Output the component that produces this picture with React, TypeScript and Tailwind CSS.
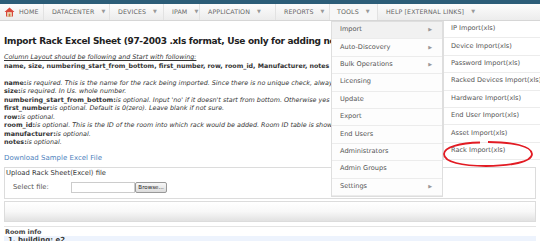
import React from "react";

const navItems = [
  { label: "DATACENTER", w: "w-[66px]" },
  { label: "DEVICES", w: "w-[54px]" },
  { label: "IPAM", w: "w-[36px]" },
  { label: "APPLICATION", w: "w-[76px]" },
  { label: "REPORTS", w: "w-[54px]" },
];

const toolsMenu = [
  { label: "Import", sub: true },
  { label: "Auto-Discovery", sub: true },
  { label: "Bulk Operations", sub: true },
  { label: "Licensing" },
  { label: "Update" },
  { label: "Export" },
  { label: "End Users" },
  { label: "Administrators" },
  { label: "Admin Groups" },
  { label: "Settings", sub: true },
];

const importMenu = [
  "IP Import(xls)",
  "Device Import(xls)",
  "Password Import(xls)",
  "Racked Devices Import(xls)",
  "Hardware Import(xls)",
  "End User Import(xls)",
  "Asset Import(xls)",
  "Rack Import(xls)",
];

const fields = [
  ["name:", "is required. This is the name for the rack being imported. Since there is no unique check, always create new one."],
  ["size:", "is required. In Us. whole number."],
  ["numbering_start_from_bottom:", "is optional. Input 'no' if it doesn't start from bottom. Otherwise yes is default."],
  ["first_number:", "is optional. Default is 0(zero). Leave blank if not sure."],
  ["row:", "is optional."],
  ["room_id:", "is optional. This is the ID of the room into which rack would be added. Room ID table is shown below."],
  ["manufacturer:", "is optional."],
  ["notes:", "is optional."],
];

function Caret() {
  return <span className="ml-[7px] text-[5px] text-[#999]">▼</span>;
}

function HomeIcon() {
  return (
    <svg width="11" height="10" viewBox="0 0 11 10">
      <path d="M5.5 0.5 L10.5 5 L9 5 L9 9.5 L2 9.5 L2 5 L0.5 5 Z" fill="#d9463a" />
      <rect x="3.2" y="5.2" width="4.6" height="4.3" fill="#f1e3c4" />
      <rect x="4.6" y="6.6" width="1.8" height="2.9" fill="#b9823f" />
    </svg>
  );
}

export default function App() {
  return (
    <div className="relative w-[540px] h-[241px] overflow-hidden bg-white font-['DejaVu_Sans',sans-serif] text-[#333]">
      {/* top strip */}
      <div className="h-[4px] bg-[#2c5d78]" />

      {/* nav */}
      <nav className="flex h-[17px] items-center border-b border-[#d6d6d6] bg-gradient-to-b from-[#fcfcfc] to-[#ececec] text-[6.3px] text-[#666] tracking-[0.1px]">
        <div className="flex h-full w-[44px] items-center gap-[4px] border-r border-[#e2e2e2] pl-[4px]">
          <HomeIcon />
          <span>HOME</span>
        </div>
        {navItems.map((n) => (
          <div key={n.label} className={`flex h-full ${n.w} items-center border-r border-[#e2e2e2] pl-[8px]`}>
            <span>{n.label}</span>
            <Caret />
          </div>
        ))}
        <div className="flex h-full w-[48px] items-center bg-[#f7f7f7] pl-[7px] border-r border-[#e2e2e2]">
          <span>TOOLS</span>
          <Caret />
        </div>
        <div className="flex h-full items-center pl-[8px]">
          <span>HELP [EXTERNAL LINKS]</span>
          <Caret />
        </div>
      </nav>

      {/* content, hidden under the open menu on the right */}
      <div className="w-[331px] overflow-hidden whitespace-nowrap pl-[4px]">
        <h1 className="mt-[14px] text-[9px] font-bold leading-[12px] tracking-[-0.3px] text-[#222]">
          Import Rack Excel Sheet (97-2003 .xls format, Use only for adding new racks)
        </h1>
        <p className="mt-[6px] text-[6.4px] italic underline leading-[8.5px]">
          Column Layout should be following and Start with following:
        </p>
        <p className="text-[6.3px] font-bold leading-[8.5px]">
          name, size, numbering_start_from_bottom, first_number, row, room_id, Manufacturer, notes
        </p>
        <div className="mt-[8.5px] text-[6.4px] leading-[8.5px]">
          {fields.map(([k, v]) => (
            <div key={k}>
              <span className="font-bold">{k}</span>
              <span className="italic">{v}</span>
            </div>
          ))}
        </div>
        <a className="mt-[7px] block text-[7px] leading-[9px] text-[#4d7fbd]">Download Sample Excel File</a>
      </div>

      <div className="mx-[4px] mt-[4px] h-[32px] border border-[#dcdcdc] text-[6.8px]">
        <div className="pl-[1px] pt-[1px] leading-[9px]">Upload Rack Sheet(Excel) file</div>
        <div className="mt-[4px] flex items-center pl-[8px] text-[#555]">
          <span className="w-[58px]">Select file:</span>
          <div className="h-[11px] w-[64px] border border-[#ccc] bg-white" />
          <button className="h-[11px] w-[32px] rounded-[2px] border border-[#999] bg-gradient-to-b from-[#f8f8f8] to-[#dcdcdc] text-[5.5px] text-[#222]">
            Browse...
          </button>
        </div>
      </div>

      <div className="mx-[4px] mt-[2px] h-[21px] border border-[#dcdcdc] bg-gradient-to-b from-white via-[#f8f8f8] to-[#e2e2e2]" />

      <div className="mx-[4px] mt-[4px] border-t border-[#e4e4e4]">
        <div className="pl-[1px] pt-[1px] text-[6.4px] font-bold leading-[8px] text-[#444]">Room info</div>
        <div className="bg-[#edf3fd] pl-[4px] text-[7px] font-bold leading-[9px]">1. building: e2</div>
      </div>

      {/* tools dropdown */}
      <div className="absolute left-[331px] top-[21px] w-[112px] border border-[#dedede] bg-white text-[6.6px] text-[#555]">
        {toolsMenu.map((m, i) => (
          <div
            key={m.label}
            className={`flex h-[17.4px] items-center justify-between border-b border-[#ececec] pl-[8px] pr-[10px] ${i === 0 ? "bg-[#f1f1f1]" : "bg-[#fdfdfd]"}`}
          >
            <span>{m.label}</span>
            {m.sub && <span className="text-[5px] text-[#999]">▶</span>}
          </div>
        ))}
      </div>

      {/* import submenu */}
      <div className="absolute left-[443px] top-[21px] w-[110px] border-l border-[#dedede] bg-white text-[6.6px] text-[#555]">
        {importMenu.map((m) => (
          <div key={m} className="flex h-[17.4px] items-center border-b border-[#ececec] pl-[7px]">
            {m}
          </div>
        ))}
      </div>

      {/* red marker */}
      <svg className="absolute left-[440px] top-[140px]" width="96" height="28" viewBox="0 0 96 28">
        <path
          d="M48 2 C72 2 92 6 92 14 C92 22 70 26 46 26 C22 26 4 22 4 14 C4 7 20 3 40 2.5"
          fill="none"
          stroke="#e21b23"
          strokeWidth="1.8"
        />
      </svg>
    </div>
  );
}
